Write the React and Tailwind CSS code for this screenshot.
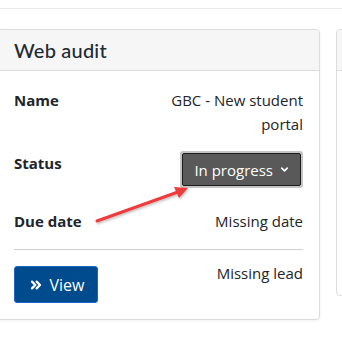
import { ChevronDown, ChevronsRight } from 'lucide-react';

const Row = ({ label, children, className = '' }) => (
  <div className={`flex items-start justify-between ${className}`}>
    <span className="font-bold text-[15px] leading-6 text-[#212529]">{label}</span>
    {children}
  </div>
);

const App = () => {
  return (
    <div className="relative w-[342px] h-[340px] bg-white overflow-hidden font-['Segoe_UI','Open_Sans',sans-serif] text-[#212529]">
      <div className="h-[9px] border-b border-[#e8e8e8]" />

      <div className="flex gap-4 mt-5">
        {/* main card */}
        <div className="-ml-[3px] w-[323px] shrink-0 rounded-[4px] border border-[#dcdcdc] bg-white shadow-[0_1px_3px_rgba(0,0,0,0.06)]">
          <div className="h-[41px] bg-[#f6f6f6] border-b border-[#dcdcdc] rounded-t-[4px] pl-4 flex items-center">
            <h2 className="text-[20px] font-medium text-[#1f2a33] font-['Lato',sans-serif] tracking-[0.2px]">Web audit</h2>
          </div>

          <div className="px-4 pt-[17px] pb-[16px] text-[15px] leading-6">
            <Row label="Name">
              <span className="text-right w-[140px]">GBC - New student portal</span>
            </Row>

            <Row label="Status" className="mt-[15px]">
              <div className="p-[2px] bg-[#c4c4c4] rounded-[3px]">
                <button className="h-[33px] pl-[11px] pr-[10px] flex items-center gap-[6px] bg-[#595959] border border-[#1c1c1c] rounded-[2px] text-white text-[15px]">
                  In progress
                  <ChevronDown size={11} strokeWidth={3.5} />
                </button>
              </div>
            </Row>

            <Row label="Due date" className="mt-[21px]">
              <span>Missing date</span>
            </Row>

            <div className="mt-[16px] border-t border-[#cfcfcf]" />

            <div className="mt-[11px] flex items-start justify-between">
              <button className="mt-[5px] h-[37px] w-[84px] rounded-[3px] border border-[#1a66c2] bg-[#004b8d] text-white text-[16px] flex items-center justify-center gap-[6px]">
                <ChevronsRight size={16} strokeWidth={3.5} />
                View
              </button>
              <span>Missing lead</span>
            </div>
          </div>
        </div>

        {/* next card, cut off */}
        <div className="w-[40px] h-[267px] shrink-0 rounded-[4px] border border-[#dcdcdc] bg-white">
          <div className="h-[41px] bg-[#f6f6f6] border-b border-[#dcdcdc] rounded-t-[4px]" />
        </div>
      </div>

      {/* annotation arrow */}
      <svg className="absolute left-0 top-0 pointer-events-none" width="342" height="340">
        <defs>
          <filter id="sh" x="-20%" y="-20%" width="140%" height="140%">
            <feDropShadow dx="1" dy="1.5" stdDeviation="1" floodColor="#000" floodOpacity="0.25" />
          </filter>
        </defs>
        <g filter="url(#sh)">
          <line x1="97" y1="221" x2="178" y2="192" stroke="#ee3b3b" strokeWidth="3" strokeLinecap="round" />
          <polygon points="188,188 174,187 179,198" fill="#ee3b3b" />
        </g>
      </svg>
    </div>
  );
};

export default App;
